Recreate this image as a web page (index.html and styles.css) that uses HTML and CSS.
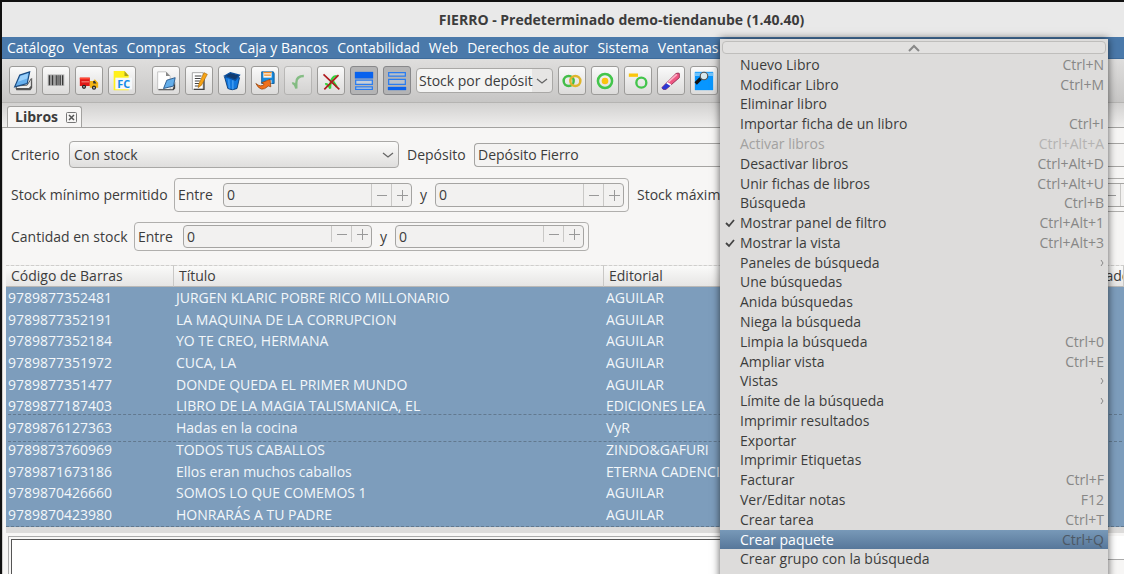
FILE: index.html
```html
<!DOCTYPE html>
<html lang="es">
<head>
<meta charset="utf-8">
<title>FIERRO</title>
<link rel="stylesheet" href="styles.css">
</head>
<body>
<div class="window">
  <header class="titlebar"><h1>FIERRO - Predeterminado demo-tiendanube (1.40.40)</h1></header>
  <nav class="menubar">
    <button>Catálogo</button><button>Ventas</button><button>Compras</button><button>Stock</button><button>Caja y Bancos</button><button>Contabilidad</button><button>Web</button><button>Derechos de autor</button><button>Sistema</button><button>Ventanas</button>
  </nav>
  <div class="toolbar">
    <button class="tool" aria-label="Libro"><svg viewBox="0 0 24 24"><path d="M3 20 20 20 23 8v12l-2 3H4z" fill="#555"/><path d="M4 18 17 17 22 9v9l-3 3H4z" fill="#eee" stroke="#444"/><path d="M8 5 20 1 17 15 2 19z" fill="#67b0ee" stroke="#1b4b80" stroke-width="1.4"/><path d="M9 6 18 3l-1 6-11 4z" fill="#9bd0fa"/></svg></button>
    <button class="tool" aria-label="Código de barras"><svg viewBox="0 0 24 24"><path d="M2 4h20v14H2z" fill="#bbb"/><path d="M4 5v12M8 5v12M13 5v12M17 5v12M20 5v12" stroke="#333" stroke-width="1.5"/><path d="M6 5v12M11 5v12M15 5v12" stroke="#666"/></svg></button>
    <button class="tool" aria-label="Remito"><svg viewBox="0 0 24 24"><path d="M1 8h12v10H1z" fill="#e01818"/><path d="M1 8h12v2H1z" fill="#ff4a35"/><path d="M3 13h9" stroke="#ffb0a0"/><path d="M13 12h4l2-2 4 4v6H13z" fill="#f2b414"/><path d="M17 12h2l2 3h-4z" fill="#333"/><circle cx="6" cy="19" r="2.5" fill="#222"/><circle cx="18" cy="20" r="2.5" fill="#222"/><circle cx="6" cy="19" r="1" fill="#ccc"/><circle cx="18" cy="20" r="1" fill="#ccc"/></svg></button>
    <button class="tool tool-last" aria-label="Factura"><svg viewBox="0 0 24 24"><path d="M2 0h13l5 5v18H2z" fill="#fff01c"/><path d="M15 0v6h5z" fill="#aaa020"/><path d="M4 8h20v14H4z" fill="#f5f8fb"/><text x="14" y="20" text-anchor="middle" class="fc">FC</text></svg></button>
    <button class="tool" aria-label="Nuevo libro"><svg viewBox="0 0 24 24"><path d="M2 1h10l5 5v16H2z" fill="#fff" stroke="#bbb"/><path d="M12 1v5h5z" fill="#888"/><path d="M3 22h17l3-9v8l-2 2H3z" fill="#444"/><path d="M13 11 23 8 21 18 9 21z" fill="#64aeea" stroke="#1c4c80"/></svg></button>
    <button class="tool" aria-label="Modificar libro"><svg viewBox="0 0 24 24"><path d="M4 2h13v20H4z" fill="#fff" stroke="#999"/><path d="M18 4v18H6" fill="none" stroke="#444" stroke-width="1.6"/><path d="M7 6h8M7 9h7M7 12h6M7 15h5M7 18h5" stroke="#444" stroke-width="1.3"/><path d="M18 2l4 2-7 13-4 3 1-5z" fill="#f6a315" stroke="#a86400" stroke-width=".7"/></svg></button>
    <button class="tool" aria-label="Eliminar libro"><svg viewBox="0 0 24 24"><path d="M3 7 21 8 18 21q-6 3-11 0z" fill="#1277de" stroke="#05356f"/><path d="M8 10l1 11M13 11v11" stroke="#3b98f0" stroke-width="2"/><path d="M3 6l7-4 11 3-5 6z" fill="#123b6e" stroke="#0b4f9e" stroke-width="1.5"/></svg></button>
    <button class="tool" aria-label="Guardar"><svg viewBox="0 0 24 24"><path d="M8 1h14l1 2v12H8z" fill="#1689dd" stroke="#0b5693"/><path d="M10 1h10v7H10z" fill="#fff3e4"/><path d="M10 2h10M11 5h8" stroke="#ee8a25" stroke-width="1.6"/><path d="M14 11h6v4h-6z" fill="#ddd"/><path d="M1 15q6 5 10 1l-3-2 10-4 1 9-3-1Q7 27 1 15z" fill="#f0701a" stroke="#8a3d06" stroke-width=".8"/></svg></button>
    <button class="tool faded" aria-label="Aceptar" disabled><svg viewBox="0 0 24 24"><path d="M5 15q3-1 5 6V14q0-8 9-8" fill="none" stroke="#38a838" stroke-width="2.8"/></svg></button>
    <button class="tool" aria-label="Cancelar"><svg viewBox="0 0 24 24"><path d="M5 16q3-1 6 5 0-15 8-15M13 10l6 9" fill="none" stroke="#35d23d" stroke-width="2.6"/><path d="M3 4 22 22M21 5 4 22" stroke="#b01a1e" stroke-width="2"/></svg></button>
    <button class="tool pressed" aria-label="Panel superior"><svg viewBox="0 0 24 24"><path d="M1 1h22v8H1z" fill="#0862ee"/><path d="M2 11h20v5H2zM2 19h20v3H2z" fill="#c9d0d8" stroke="#2a7cf0" stroke-width="1.5"/></svg></button>
    <button class="tool pressed" aria-label="Panel inferior"><svg viewBox="0 0 24 24"><path d="M2 2h20v4H2zM2 10h20v6H2z" fill="#b9c0c9" stroke="#2a7cf0" stroke-width="1.5"/><path d="M1 19h22v4H1z" fill="#0862ee"/></svg></button>
    <div class="combo combo-small">
      <select aria-label="Vista"><option>Stock por depósito</option></select>
      <svg viewBox="0 0 12 12"><path d="M1 4l5 4 5-4" fill="none" stroke="#666" stroke-width="1.3"/></svg>
    </div>
    <button class="tool" aria-label="Une búsquedas"><svg viewBox="0 0 24 24"><circle cx="8" cy="12" r="6" fill="none" stroke="#43bd48" stroke-width="3"/><circle cx="16" cy="12" r="6" fill="none" stroke="#dfb52c" stroke-width="3"/></svg></button>
    <button class="tool" aria-label="Anida búsquedas"><svg viewBox="0 0 24 24"><circle cx="12" cy="12" r="8.5" fill="none" stroke="#43c54b" stroke-width="3"/><circle cx="12" cy="12" r="4" fill="#fbc40e"/></svg></button>
    <button class="tool" aria-label="Niega la búsqueda"><svg viewBox="0 0 24 24"><path d="M1 5h11" stroke="#fbc60c" stroke-width="4"/><circle cx="16" cy="14" r="6" fill="none" stroke="#43c54b" stroke-width="2.8"/></svg></button>
    <button class="tool" aria-label="Limpia la búsqueda"><svg viewBox="0 0 24 24"><path d="M1 20 18 3q3-1 4 0v5L6 22q-4 1-5-2z" fill="#ee5783" stroke="#8c2348"/><path d="M1 20l6-6 5 3-6 5q-4 1-5-2z" fill="#2b37d4"/><path d="M7 14l5 3" stroke="#fff" stroke-width="2"/><path d="M9 13 19 4" stroke="#ffb2c7" stroke-width="1.8"/></svg></button>
    <button class="tool" aria-label="Ampliar vista"><svg viewBox="0 0 24 24"><path d="M1 1h22v22H1z" fill="#0796ff"/><path d="M1 2h22v4H1z" fill="#71c3fb"/><path d="M2 15l6-6" stroke="#111" stroke-width="4"/><circle cx="12" cy="6" r="4.5" fill="#d7e8ee" stroke="#555" stroke-width="1.4"/></svg></button>
  </div>
  <div class="tabs">
    <div class="tab"><button class="tab-name">Libros</button><button class="tab-close" aria-label="Cerrar"><svg viewBox="0 0 11 11"><rect x=".5" y=".5" width="10" height="10" rx="1" fill="none" stroke="#777"/><path d="M3 3l5 5M8 3 3 8" stroke="#555" stroke-width="1.5"/></svg></button></div>
  </div>
  <main class="content">
    <svg width="0" height="0" class="defs" aria-hidden="true">
      <symbol id="minus" viewBox="0 0 12 12"><path d="M1 6.5h10" stroke="#999"/></symbol>
      <symbol id="plus" viewBox="0 0 12 12"><path d="M1 6.5h11M6.500 1v11" stroke="#999"/></symbol>
    </svg>
    <form class="filters">
      <div class="row">
        <label class="w-crit" for="criterio">Criterio</label>
        <div class="combo combo-large">
          <select id="criterio"><option>Con stock</option></select>
          <svg viewBox="0 0 12 12"><path d="M1 4l5 4 5-4" fill="none" stroke="#666" stroke-width="1.3"/></svg>
        </div>
        <label class="w-dep" for="deposito">Depósito</label>
        <input class="entry" id="deposito" type="text" value="Depósito Fierro">
      </div>
      <div class="row">
        <span class="w-min">Stock mínimo permitido</span>
        <div class="range">
          <label class="w-entre" for="min1">Entre</label>
          <div class="spin"><input id="min1" type="text" value="0"><button type="button" aria-label="Menos"><svg><use href="#minus"/></svg></button><button type="button" aria-label="Más"><svg><use href="#plus"/></svg></button></div>
          <label class="w-y" for="min2">y</label>
          <div class="spin"><input id="min2" type="text" value="0"><button type="button" aria-label="Menos"><svg><use href="#minus"/></svg></button><button type="button" aria-label="Más"><svg><use href="#plus"/></svg></button></div>
        </div>
        <span class="w-max">Stock máximo</span>
        <div class="range">
          <div class="spin"><input type="text" aria-label="Stock máximo desde"><button type="button" aria-label="Menos"><svg><use href="#minus"/></svg></button><button type="button" aria-label="Más"><svg><use href="#plus"/></svg></button></div>
          <span class="w-y"></span>
          <div class="spin"><input type="text" aria-label="Stock máximo hasta"><button type="button" aria-label="Menos"><svg><use href="#minus"/></svg></button><button type="button" aria-label="Más"><svg><use href="#plus"/></svg></button></div>
        </div>
      </div>
      <div class="row">
        <span class="w-cant">Cantidad en stock</span>
        <div class="range range-low">
          <label class="w-entre" for="cant1">Entre</label>
          <div class="spin"><input id="cant1" type="text" value="0"><button type="button" aria-label="Menos"><svg><use href="#minus"/></svg></button><button type="button" aria-label="Más"><svg><use href="#plus"/></svg></button></div>
          <label class="w-y" for="cant2">y</label>
          <div class="spin"><input id="cant2" type="text" value="0"><button type="button" aria-label="Menos"><svg><use href="#minus"/></svg></button><button type="button" aria-label="Más"><svg><use href="#plus"/></svg></button></div>
        </div>
      </div>
    </form>
    <div class="grid">
      <table>
        <colgroup><col class="c-code"><col class="c-title"><col class="c-pub"><col></colgroup>
        <thead><tr><th>Código de Barras</th><th>Título</th><th>Editorial</th><th>Estado</th></tr></thead>
        <tbody>
          <tr><td>9789877352481</td><td>JURGEN KLARIC POBRE RICO MILLONARIO</td><td>AGUILAR</td><td></td></tr>
          <tr><td>9789877352191</td><td>LA MAQUINA DE LA CORRUPCION</td><td>AGUILAR</td><td></td></tr>
          <tr><td>9789877352184</td><td>YO TE CREO, HERMANA</td><td>AGUILAR</td><td></td></tr>
          <tr><td>9789877351972</td><td>CUCA, LA</td><td>AGUILAR</td><td></td></tr>
          <tr><td>9789877351477</td><td>DONDE QUEDA EL PRIMER MUNDO</td><td>AGUILAR</td><td></td></tr>
          <tr><td>9789877187403</td><td>LIBRO DE LA MAGIA TALISMANICA, EL</td><td>EDICIONES LEA</td><td></td></tr>
          <tr class="focused"><td>9789876127363</td><td>Hadas en la cocina</td><td>VyR</td><td></td></tr>
          <tr><td>9789873760969</td><td>TODOS TUS CABALLOS</td><td>ZINDO&amp;GAFURI</td><td></td></tr>
          <tr><td>9789871673186</td><td>Ellos eran muchos caballos</td><td>ETERNA CADENCIA</td><td></td></tr>
          <tr><td>9789870426660</td><td>SOMOS LO QUE COMEMOS 1</td><td>AGUILAR</td><td></td></tr>
          <tr><td>9789870423980</td><td>HONRARÁS A TU PADRE</td><td>AGUILAR</td><td></td></tr>
        </tbody>
      </table>
    </div>
    <div class="splitter"></div>
    <section class="details"><div class="view"><div class="page"></div></div><div class="side"></div></section>
  </main>

  <div class="menu" role="menu">
    <button class="scroll-up" aria-label="Subir"><svg viewBox="0 0 12 8"><path d="M1 7l5-5 5 5" fill="none" stroke="#888" stroke-width="2"/></svg></button>
    <div class="items">
      <button>Nuevo Libro<kbd>Ctrl+N</kbd></button>
      <button>Modificar Libro<kbd>Ctrl+M</kbd></button>
      <button>Eliminar libro</button>
      <button>Importar ficha de un libro<kbd>Ctrl+I</kbd></button>
      <button disabled>Activar libros<kbd>Ctrl+Alt+A</kbd></button>
      <button>Desactivar libros<kbd>Ctrl+Alt+D</kbd></button>
      <button>Unir fichas de libros<kbd>Ctrl+Alt+U</kbd></button>
      <button>Búsqueda<kbd>Ctrl+B</kbd></button>
      <button class="checked"><svg viewBox="0 0 10 10"><path d="M1 5l3 3 5-6" fill="none" stroke="#444" stroke-width="1.8"/></svg>Mostrar panel de filtro<kbd>Ctrl+Alt+1</kbd></button>
      <button class="checked"><svg viewBox="0 0 10 10"><path d="M1 5l3 3 5-6" fill="none" stroke="#444" stroke-width="1.8"/></svg>Mostrar la vista<kbd>Ctrl+Alt+3</kbd></button>
      <button>Paneles de búsqueda<svg class="sub" viewBox="0 0 4 8"><path d="M1 1l2 3-2 3" fill="none" stroke="#888"/></svg></button>
      <button>Une búsquedas</button>
      <button>Anida búsquedas</button>
      <button>Niega la búsqueda</button>
      <button>Limpia la búsqueda<kbd>Ctrl+0</kbd></button>
      <button>Ampliar vista<kbd>Ctrl+E</kbd></button>
      <button>Vistas<svg class="sub" viewBox="0 0 4 8"><path d="M1 1l2 3-2 3" fill="none" stroke="#888"/></svg></button>
      <button>Límite de la búsqueda<svg class="sub" viewBox="0 0 4 8"><path d="M1 1l2 3-2 3" fill="none" stroke="#888"/></svg></button>
      <button>Imprimir resultados</button>
      <button>Exportar</button>
      <button>Imprimir Etiquetas</button>
      <button>Facturar<kbd>Ctrl+F</kbd></button>
      <button>Ver/Editar notas<kbd>F12</kbd></button>
      <button>Crear tarea<kbd>Ctrl+T</kbd></button>
      <button class="active">Crear paquete<kbd>Ctrl+Q</kbd></button>
      <button>Crear grupo con la búsqueda</button>
      <button>Agregar a grupo</button>
    </div>
  </div>
</div>
</body>
</html>
```
FILE: styles.css
```css
* { box-sizing: border-box; }
html, body { height: 100%; }
body { margin: 0; overflow: hidden; color: #3c3c3c; }
body, button, input, select, kbd { font-family: "Open Sans", "Noto Sans", sans-serif; font-size: 14px; line-height: 18px; }
button { margin: 0; padding: 0; border: 0; background: none; color: inherit; white-space: nowrap; }
svg { display: block; }

.window { position: relative; display: flex; flex-direction: column; height: 100vh; border-top: 2px solid #111; border-left: 2px solid #111; background: #f7f6f5; overflow: hidden; }
.titlebar { flex: none; padding: 9px 0 8px 117px; background: #e9e9e9; text-align: center; }
.titlebar h1 { margin: 0; font-size: 14px; line-height: 18px; }
.menubar { flex: none; display: flex; gap: 9px; height: 22px; padding-left: 5px; background: #4a79aa; border-bottom: 1px solid #3d6b9b; color: #fff; }

.toolbar { flex: none; display: flex; gap: 5px; height: 44px; padding: 7px 0 0 7px; background: linear-gradient(#dfdedd, #c7c6c5); border-bottom: 1px solid #b5b4b2; }
.tool { flex: none; display: grid; place-items: center; width: 28px; height: 29px; border: 1px solid #9c9b99; border-radius: 3px; background: linear-gradient(#fafafa, #dcdbda); }
.tool svg { width: 20px; height: 20px; }
.tool-last { margin-right: 11px; }
.faded { opacity: .5; }
.pressed { background: #b4b4b5; border-color: #88888a; }
.fc { font: bold 13px "Open Sans", sans-serif; fill: #118ae8; }

.combo { display: grid; align-items: center; }
.combo select { grid-area: 1 / 1; width: 100%; height: 100%; appearance: none; border: 1px solid #a9a8a6; border-radius: 4px; color: inherit; }
.combo svg { grid-area: 1 / 1; justify-self: end; width: 12px; height: 12px; margin-right: 5px; pointer-events: none; }
.combo-small { width: 137px; height: 25px; margin-top: 2px; }
.combo-small select { padding: 0 19px 0 2px; background: linear-gradient(90deg, #f4f4f3 85%, #e6e5e4 85%); }
.combo-large { width: 330px; height: 27px; }
.combo-large select { padding: 0 24px 0 4px; background: linear-gradient(#fbfbfa, #dfdedd); }

.tabs { flex: none; display: flex; align-items: flex-end; height: 25px; padding-left: 5px; background: linear-gradient(#d2d1d0, #efeeed); border-bottom: 1px solid #a3a2a0; }
.tab { display: flex; align-items: center; gap: 8px; height: 21px; padding: 0 4px 0 7px; border: 1px solid #a3a2a0; border-bottom: 0; border-radius: 3px 3px 0 0; background: #f7f6f5; }
.tab-name { font-weight: bold; }
.tab-close svg { width: 11px; height: 11px; }

.content { flex: 1; min-height: 0; display: flex; flex-direction: column; border-left: 1px solid #cfcecc; }
.defs { flex: none; width: 0; height: 0; }
.filters { flex: none; display: flex; flex-direction: column; gap: 10px; padding: 13px 0 14px 8px; overflow: hidden; }
.row { display: flex; align-items: center; white-space: nowrap; }
.row > *, .range > * { flex: none; }
.w-crit { width: 58px; }
.w-dep { width: 75px; padding-left: 8px; }
.w-min { width: 163px; }
.w-max { width: 107px; padding-left: 8px; }
.w-cant { width: 123px; }
.w-entre { width: 45px; }
.w-y { width: 23px; text-align: center; }
.row > .entry { flex: 1; height: 24px; padding: 0 3px; border: 1px solid #a5a4a2; border-radius: 4px 0 0 4px; border-right: 0; background: #f4f3f2; color: inherit; }
.range { display: flex; align-items: center; height: 34px; padding: 0 4px 0 3px; border: 1px solid #b0afad; border-radius: 4px; }
.range-low { height: 29px; }
.spin { display: flex; width: 189px; height: 24px; border: 1px solid #a5a4a2; border-radius: 4px; background: #f2f1f0; overflow: hidden; }
.spin input { flex: 1; min-width: 0; padding: 0 3px; border: 0; background: none; color: inherit; }
.spin button { display: grid; place-items: center; width: 20px; border-left: 1px solid #c9c8c6; }
.spin svg { width: 12px; height: 12px; }
.range-low .spin { height: 23px; }
.range-low .spin button { height: 16px; }

.grid { flex: none; margin-left: 3px; background: #7d9dbc; border-bottom: 1px dashed #62798f; overflow: hidden; }
table { width: 100%; height: 261px; table-layout: fixed; border-collapse: separate; border-spacing: 0; }
.c-code { width: 168px; }
.c-title { width: 430px; }
.c-pub { width: 477px; }
th, td { padding: 0; text-align: left; white-space: nowrap; overflow: hidden; line-height: 18px; }
th { height: 22px; padding: 0 5px; border-top: 1px dashed #cfcecc; border-bottom: 1px solid #b9b8b6; border-right: 1px solid #c9c8c6; background: linear-gradient(#fafaf9, #e6e5e4); font-weight: normal; }
td { padding: 0 2px; color: #f3f7fa; }
.focused { outline: 1px dashed #62798f; outline-offset: 2px; }
.splitter { flex: none; height: 6px; margin-left: 3px; background: #dcdbda; }
.details { flex: 1; min-height: 0; display: flex; gap: 4px; padding: 3px 0 0 5px; }
.view { flex: 1; padding: 2px 0 0 2px; border: solid #aaa; border-width: 1px 0 0 1px; }
.page { height: 100%; border: solid #555; border-width: 1px 0 0 1px; background: #fff; }
.side { width: 20px; height: 24px; background: #fff; border-bottom: 1px solid #aaa; }

.menu { position: absolute; z-index: 2; top: 37px; right: 16px; bottom: -15px; width: 388px; display: flex; flex-direction: column; background: #dddcdb; box-shadow: 0 0 8px rgba(0, 0, 0, .65); }
.scroll-up { flex: none; display: grid; place-items: center; height: 13px; margin: 2px 2px 1px; border: 1px solid #bfbebc; border-radius: 4px; background: #e2e1e0; }
.scroll-up svg { width: 12px; height: 8px; }
.items { flex: 1; min-height: 0; display: grid; grid-auto-rows: minmax(0, 1fr); }
.items button { display: flex; align-items: center; padding: 0 4px 0 20px; text-align: left; }
.items .checked { padding-left: 5px; }
.checked svg { width: 10px; height: 10px; margin-right: 5px; }
.items kbd, .items .sub { margin-left: auto; color: #878786; }
.items .sub { width: 4px; height: 8px; }
.items button:disabled { color: #a2a1a0; }
.items button:disabled kbd { color: #b4b3b2; }
.items .active { background: linear-gradient(#7899b8, #57779a); color: #fff; }
.items .active kbd { color: #4d5864; }
```
